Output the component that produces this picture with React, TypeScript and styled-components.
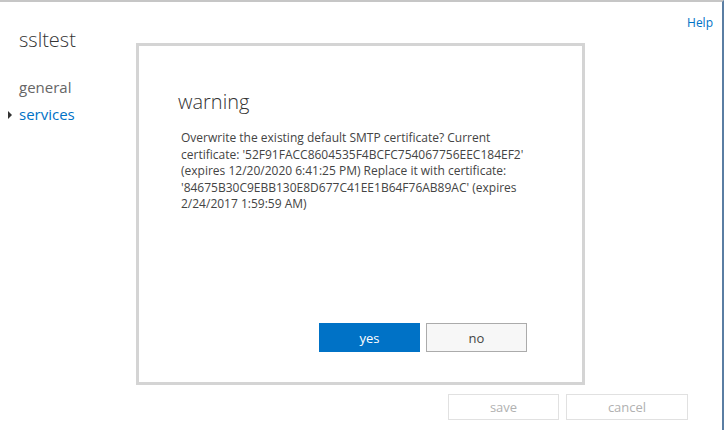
import React from 'react'
import styled, { createGlobalStyle } from 'styled-components'

const GlobalStyle = createGlobalStyle`
  html, body {
    margin: 0;
    padding: 0;
    background: #fff;
  }
  body {
    font-family: 'Segoe UI', 'Open Sans', 'Noto Sans', sans-serif;
    color: #333;
  }
`

const Page = styled.div`
  position: relative;
  width: 724px;
  height: 430px;
  box-sizing: border-box;
  border-top: 2px solid #c6c6c6;
  border-right: 2px solid #5a7ea3;
  display: grid;
  grid-template-columns: 130px 1fr;
  grid-template-rows: 1fr auto;
  overflow: hidden;
`

const Nav = styled.nav`
  display: flex;
  flex-direction: column;
  padding: 24px 0 0 19px;
`

const SiteTitle = styled.h1`
  margin: 0 0 20px;
  font-size: 20px;
  font-weight: 300;
  color: #333;
  line-height: 28px;
`

const NavItem = styled.a<{ $active?: boolean }>`
  position: relative;
  font-size: 15px;
  line-height: 27px;
  font-weight: 400;
  color: ${p => (p.$active ? '#0072c6' : '#666')};
  text-decoration: none;

  &::before {
    content: '';
    display: ${p => (p.$active ? 'block' : 'none')};
    position: absolute;
    left: -11px;
    top: 10px;
    border-left: 4px solid #333;
    border-top: 4px solid transparent;
    border-bottom: 4px solid transparent;
  }
`

const Main = styled.div`
  display: flex;
  justify-content: flex-end;
  padding: 12px 9px 0 0;
`

const HelpLink = styled.a`
  font-size: 12px;
  color: #0072c6;
  text-decoration: none;
`

const Footer = styled.div`
  grid-column: 1 / -1;
  display: flex;
  justify-content: flex-end;
  gap: 7px;
  padding: 0 34px 10px 0;
`

const FooterButton = styled.button<{ $width: number }>`
  width: ${p => p.$width}px;
  height: 26px;
  box-sizing: border-box;
  border: 1px solid #e1e1e1;
  background: #fff;
  color: #b1b1b1;
  font-family: inherit;
  font-size: 13px;
  padding: 0;
`

const Dialog = styled.div`
  position: absolute;
  left: 136px;
  top: 41px;
  width: 449px;
  height: 342px;
  box-sizing: border-box;
  border: 3px solid #d4d4d4;
  background: #fff;
  display: flex;
  flex-direction: column;
  padding: 42px 55px 30px 39px;
`

const DialogTitle = styled.h2`
  margin: 0 0 14px;
  font-size: 20px;
  font-weight: 300;
  line-height: 28px;
  color: #333;
`

const DialogText = styled.p`
  margin: 0;
  padding-left: 3px;
  font-size: 12px;
  line-height: 16.5px;
  color: #444;
  max-width: 370px;
`

const DialogActions = styled.div`
  margin-top: auto;
  display: flex;
  justify-content: flex-end;
  gap: 6px;
`

const DialogButton = styled.button<{ $primary?: boolean }>`
  width: 101px;
  height: 29px;
  box-sizing: border-box;
  border: 1px solid ${p => (p.$primary ? '#0072c6' : '#ababab')};
  background: ${p => (p.$primary ? '#0072c6' : '#f7f7f7')};
  color: ${p => (p.$primary ? '#fff' : '#444')};
  font-family: inherit;
  font-size: 13px;
  padding: 0;
`

export default function App() {
  return (
    <>
      <GlobalStyle />
      <Page>
        <Nav>
          <SiteTitle>ssltest</SiteTitle>
          <NavItem>general</NavItem>
          <NavItem $active>services</NavItem>
        </Nav>
        <Main>
          <HelpLink href="#">Help</HelpLink>
        </Main>
        <Footer>
          <FooterButton $width={111}>save</FooterButton>
          <FooterButton $width={122}>cancel</FooterButton>
        </Footer>
        <Dialog>
          <DialogTitle>warning</DialogTitle>
          <DialogText>
            Overwrite the existing default SMTP certificate? Current certificate:
            '52F91FACC8604535F4BCFC754067756EEC184EF2' (expires 12/20/2020 6:41:25
            PM) Replace it with certificate:
            '84675B30C9EBB130E8D677C41EE1B64F76AB89AC' (expires 2/24/2017 1:59:59 AM)
          </DialogText>
          <DialogActions>
            <DialogButton $primary>yes</DialogButton>
            <DialogButton>no</DialogButton>
          </DialogActions>
        </Dialog>
      </Page>
    </>
  )
}
